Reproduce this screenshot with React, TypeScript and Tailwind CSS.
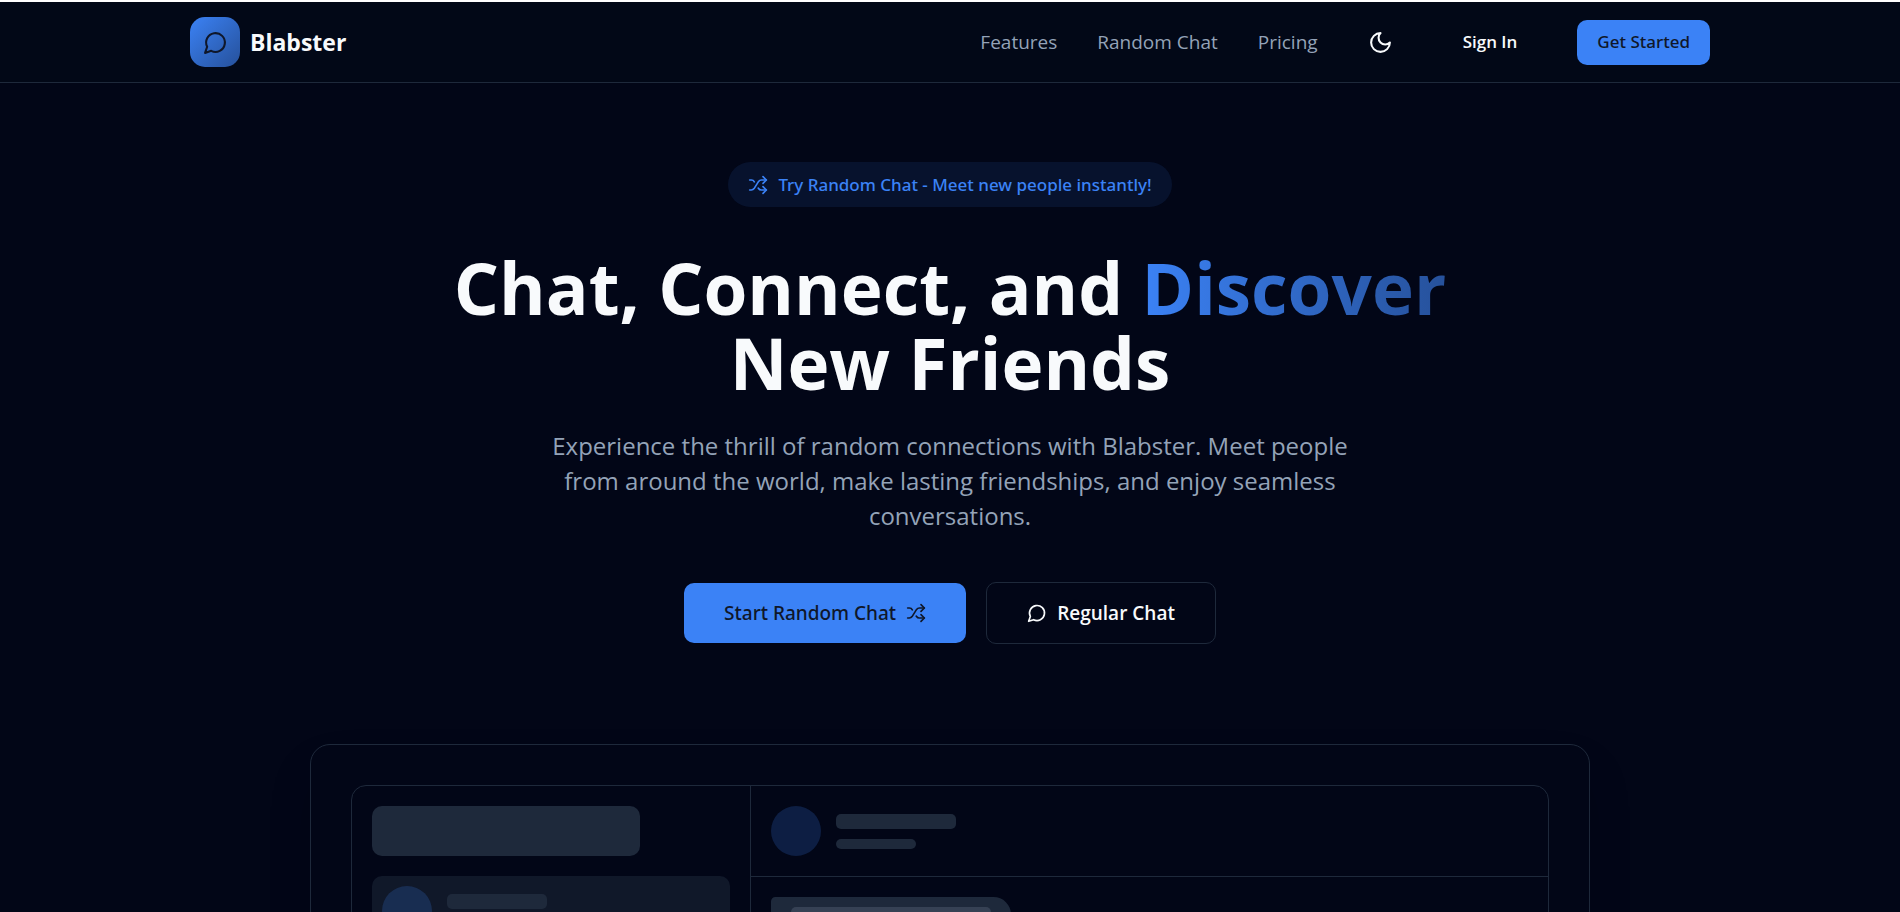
import React, { useState } from "react";
import { Shuffle } from "lucide-react";

const navLinks = [
  { label: "Features", href: "#features" },
  { label: "Random Chat", href: "#random-chat" },
  { label: "Pricing", href: "#pricing" },
];

const conversations = [
  { id: 1, active: true },
  { id: 2, active: false },
  { id: 3, active: false },
  { id: 4, active: false },
];

function MoonIcon({ className }: { className?: string }) {
  return (
    <svg
      viewBox="0 0 24 24"
      fill="none"
      stroke="currentColor"
      strokeWidth="2"
      strokeLinecap="round"
      strokeLinejoin="round"
      className={className}
      aria-hidden="true"
    >
      <path d="M12 3a6 6 0 0 0 9 9 9 9 0 1 1-9-9Z" />
    </svg>
  );
}

function ChatIcon({ className }: { className?: string }) {
  return (
    <svg
      viewBox="0 0 24 24"
      fill="none"
      stroke="currentColor"
      strokeWidth="2"
      strokeLinecap="round"
      strokeLinejoin="round"
      className={className}
      aria-hidden="true"
    >
      <path d="M7.9 20A9 9 0 1 0 4 16.1L2 22Z" />
    </svg>
  );
}

function Header() {
  const [dark, setDark] = useState(true);

  return (
    <header className="border-t-2 border-b border-t-white border-b-[#1e293b] bg-[#020817]">
      <div className="mx-auto flex h-20 max-w-[1600px] items-center justify-between px-10">
        <a href="#" className="flex items-center gap-2.5">
          <span className="flex size-12.5 items-center justify-center rounded-[15px] bg-linear-to-br from-[#3b82f6] to-[#26519b] text-[#0f172a]">
            <ChatIcon className="size-[25px]" />
          </span>
          <span className="text-[23px] font-bold text-[#f8fafc]">Blabster</span>
        </a>

        <nav className="flex items-center gap-10">
          {navLinks.map((link) => (
            <a key={link.label} href={link.href} className="text-[19px] text-[#94a3b8] hover:text-[#f8fafc]">
              {link.label}
            </a>
          ))}
          <button
            type="button"
            aria-label="Toggle theme"
            aria-pressed={dark}
            onClick={() => setDark(!dark)}
            className="flex size-[45px] items-center justify-center rounded-[10px] text-[#f8fafc] hover:bg-[#1e293b]"
          >
            <MoonIcon className="size-[25px]" />
          </button>
          <button type="button" className="h-[45px] rounded-[10px] px-5 text-[17px] font-semibold text-[#f8fafc] hover:bg-[#1e293b]">
            Sign In
          </button>
          <button type="button" className="h-[45px] rounded-[10px] bg-[#3b82f6] px-5 font-['Noto_Sans','Open_Sans',sans-serif] text-[17px] font-medium text-[#0f172a] hover:bg-[#60a5fa]">
            Get Started
          </button>
        </nav>
      </div>
    </header>
  );
}

function Hero() {
  return (
    <section className="flex flex-col items-center px-10 pt-[79px] text-center">
      {/* Badge */}
      <a href="#random-chat" className="flex h-[45px] items-center gap-2.5 rounded-full bg-[#3b82f6]/10 px-5 font-['Noto_Sans','Open_Sans',sans-serif] text-[17px] font-medium text-[#3b82f6]">
        <Shuffle className="size-5" />
        Try Random Chat - Meet new people instantly!
      </a>

      {/* Headline */}
      <h1 className="mt-[43px] max-w-[1120px] text-[71px] leading-[75px] font-bold text-[#f8fafc]">
        Chat, Connect, and{" "}
        <span className="bg-linear-to-r from-[#3b82f6] to-[#26519b] bg-clip-text text-transparent">Discover</span>
        <br />
        New Friends
      </h1>
      <p className="mt-7 max-w-[840px] text-2xl leading-[35px] text-[#94a3b8]">
        Experience the thrill of random connections with Blabster. Meet people from around the world, make lasting
        friendships, and enjoy seamless conversations.
      </p>

      {/* Actions */}
      <div className="mt-[49px] flex items-center gap-5">
        <button type="button" className="flex h-15 items-center gap-2.5 rounded-[10px] bg-[#3b82f6] px-10 font-['Noto_Sans','Open_Sans',sans-serif] text-[19px] font-medium text-[#0f172a] hover:bg-[#60a5fa]">
          Start Random Chat
          <Shuffle className="size-5" />
        </button>
        <button type="button" className="flex h-[62px] items-center gap-2.5 rounded-[10px] border border-[#1e293b] px-10 text-[19px] font-semibold text-[#f8fafc] hover:bg-[#1e293b]">
          <ChatIcon className="size-5" />
          Regular Chat
        </button>
      </div>
    </section>
  );
}

function ChatPreview() {
  return (
    <section className="px-10 pt-25 pb-20">
      <div className="mx-auto max-w-[1280px] rounded-[20px] border border-[#1e293b] p-10 shadow-2xl">
        <div className="grid h-[600px] grid-cols-3 overflow-hidden rounded-[15px] border border-[#1e293b]">
          {/* Conversation list */}
          <div className="flex flex-col gap-5 border-r border-[#1e293b] p-5">
            <div className="h-12.5 w-3/4 rounded-[10px] bg-[#1e293b]" />
            {conversations.map((item) => (
              <div
                key={item.id}
                className={`flex items-center gap-[15px] rounded-[10px] p-2.5 ${item.active ? "bg-[#1e293b]/50" : ""}`}
              >
                <div className="size-12.5 rounded-full bg-[#3b82f6]/20" />
                <div className="flex flex-col gap-2.5">
                  <div className="h-[15px] w-25 rounded-[5px] bg-[#1e293b]" />
                  <div className="h-2.5 w-40 rounded-[5px] bg-[#1e293b]" />
                </div>
              </div>
            ))}
          </div>

          {/* Open conversation */}
          <div className="col-span-2 flex flex-col">
            <div className="flex items-center gap-[15px] border-b border-[#1e293b] p-5">
              <div className="size-12.5 rounded-full bg-[#3b82f6]/20" />
              <div className="flex flex-col gap-2.5">
                <div className="h-[15px] w-30 rounded-[5px] bg-[#1e293b]" />
                <div className="h-2.5 w-20 rounded-[5px] bg-[#1e293b]" />
              </div>
            </div>
            <div className="flex flex-col items-start gap-5 p-5">
              <div className="rounded-[20px] rounded-tl-[5px] bg-[#1e293b] px-5 py-2.5">
                <div className="h-[15px] w-50 rounded-[5px] bg-[#94a3b8]/20" />
              </div>
              <div className="self-end rounded-[20px] rounded-tr-[5px] bg-[#3b82f6]/20 px-5 py-2.5">
                <div className="h-[15px] w-40 rounded-[5px] bg-[#3b82f6]/30" />
              </div>
            </div>
          </div>
        </div>
      </div>
    </section>
  );
}

export default function App() {
  return (
    <div className="min-h-screen bg-[#020617] font-['Open_Sans','Noto_Sans',sans-serif]">
      <Header />
      <main>
        <Hero />
        <ChatPreview />
      </main>
    </div>
  );
}
